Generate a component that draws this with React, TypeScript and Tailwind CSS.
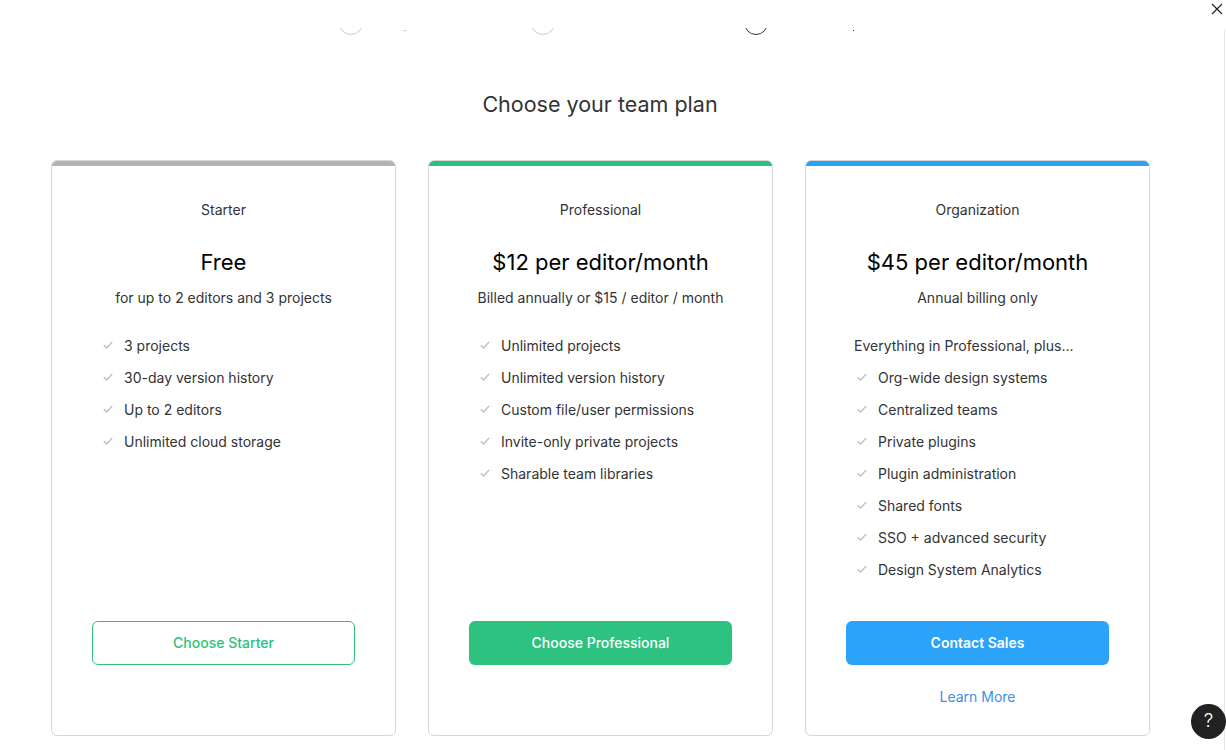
import React from 'react';

type Plan = {
  name: string;
  price: string;
  sub: string;
  intro?: string;
  features: string[];
  bar: string;
  cta: string;
  filled: boolean;
  btn: string;
  learnMore?: boolean;
};

const plans: Plan[] = [
  {
    name: 'Starter',
    price: 'Free',
    sub: 'for up to 2 editors and 3 projects',
    features: ['3 projects', '30-day version history', 'Up to 2 editors', 'Unlimited cloud storage'],
    bar: 'bg-[#b3b3b3]',
    cta: 'Choose Starter',
    filled: false,
    btn: 'border border-[#2bc17c] text-[#2bc17c] bg-white',
  },
  {
    name: 'Professional',
    price: '$12 per editor/month',
    sub: 'Billed annually or $15 / editor / month',
    features: [
      'Unlimited projects',
      'Unlimited version history',
      'Custom file/user permissions',
      'Invite-only private projects',
      'Sharable team libraries',
    ],
    bar: 'bg-[#2bc17c]',
    cta: 'Choose Professional',
    filled: true,
    btn: 'bg-[#2dc27f] text-white',
  },
  {
    name: 'Organization',
    price: '$45 per editor/month',
    sub: 'Annual billing only',
    intro: 'Everything in Professional, plus...',
    features: [
      'Org-wide design systems',
      'Centralized teams',
      'Private plugins',
      'Plugin administration',
      'Shared fonts',
      'SSO + advanced security',
      'Design System Analytics',
    ],
    bar: 'bg-[#2aa0f7]',
    cta: 'Contact Sales',
    filled: true,
    btn: 'bg-[#2aa3f8] text-white font-semibold',
    learnMore: true,
  },
];

function Check() {
  return (
    <svg width="10" height="8" viewBox="0 0 10 8" className="shrink-0">
      <path d="M0.8 4.2 L3.7 6.9 L9.2 0.9" fill="none" stroke="#bdbdbd" strokeWidth="1.4" />
    </svg>
  );
}

function PlanCard({ plan }: { plan: Plan }) {
  return (
    <div className="w-[345px] h-[576px] flex flex-col rounded-[6px] border border-[#d6d6d6] overflow-hidden bg-white">
      {/* coloured strip on top */}
      <div className={`h-[6px] -mx-px -mt-px ${plan.bar}`} />
      <div className="text-center text-[14px] leading-5 text-[#333] mt-[34px]">{plan.name}</div>
      <div className="text-center text-[22px] leading-8 text-black mt-[26px]">{plan.price}</div>
      <div className="text-center text-[14px] leading-5 text-[#333] mt-[10px]">{plan.sub}</div>
      <ul className="flex-1 mt-[21px] pl-[51px]">
        {plan.intro && <li className="h-8 flex items-center -ml-[3px] text-[14px] text-[#333]">{plan.intro}</li>}
        {plan.features.map((f) => (
          <li key={f} className="h-8 flex items-center gap-[11px] text-[14px] text-[#333]">
            <Check />
            {f}
          </li>
        ))}
      </ul>
      <div className="px-[40px]">
        <button className={`w-full h-[44px] rounded-[6px] text-[14px] font-medium pb-px ${plan.btn}`}>{plan.cta}</button>
      </div>
      <div className="h-[70px] flex items-center justify-center pb-[7px]">
        {plan.learnMore && <a className="text-[14px] text-[#3c8ef0]">Learn More</a>}
      </div>
    </div>
  );
}

export default function App() {
  return (
    <div className="relative w-full h-[750px] overflow-hidden bg-white font-['Inter',sans-serif]">
      <div className="w-[1200px]">
        {/* stepper, mostly scrolled out of view */}
        <div className="h-[34px] pt-[28px]">
          <div className="h-[7px] overflow-hidden">
            <div className="flex items-start -mt-[17px] pl-[339px]">
              <div className="w-6 h-6 rounded-full border border-[#c9c9c9]" />
              <div className="w-[2px] h-px bg-[#bbb] mt-[19px] ml-[41px]" />
              <div className="w-6 h-6 rounded-full border border-[#c9c9c9] ml-[125px]" />
              <div className="w-6 h-6 rounded-full border border-[#333] ml-[189px]" />
              <div className="w-px h-px bg-[#333] mt-[19px] ml-[85px]" />
            </div>
          </div>
        </div>

        <h1 className="text-center text-[21.5px] leading-7 text-[#333] mt-[56px]">Choose your team plan</h1>

        <div className="flex justify-center gap-[32px] mt-[42px] pl-px">
          {plans.map((p) => (
            <PlanCard key={p.name} plan={p} />
          ))}
        </div>
      </div>

      {/* close */}
      <button className="absolute top-[3px] right-[3px] w-[12px] h-[12px]">
        <svg width="12" height="12" viewBox="0 0 12 12">
          <path d="M1 1 L11 11 M11 1 L1 11" stroke="#222" strokeWidth="1.2" />
        </svg>
      </button>

      {/* edge line */}
      <div className="absolute top-[29px] bottom-0 left-[1224px] w-px bg-[#e6e6e6]" />

      {/* help */}
      <button className="absolute left-[1191px] top-[704px] w-[35px] h-[35px] rounded-full bg-[#222] text-white text-[19px] font-light flex items-center justify-center">
        ?
      </button>
    </div>
  );
}
